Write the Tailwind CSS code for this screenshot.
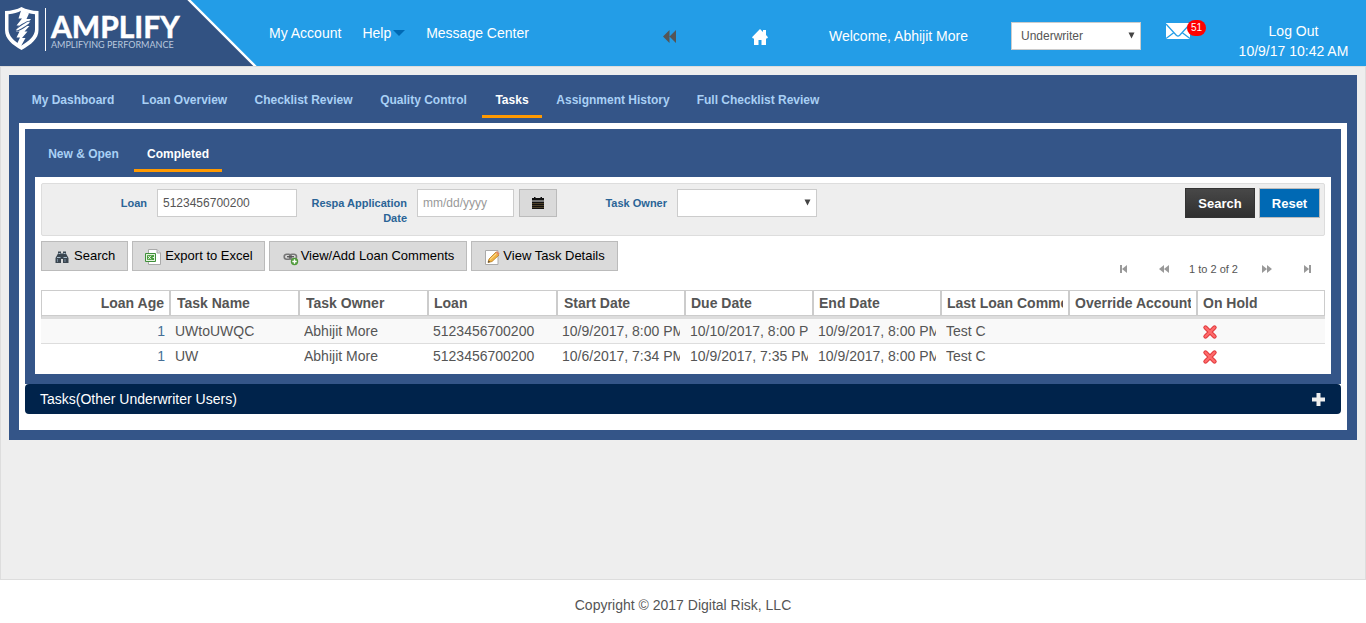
<!DOCTYPE html>
<html lang="en">
<head>
<meta charset="utf-8">
<title>Amplify - Tasks</title>
<script src="https://cdn.jsdelivr.net/npm/@tailwindcss/browser@4"></script>
</head>
<body class="flex min-h-screen flex-col bg-white font-['Liberation_Sans',Arial,sans-serif] text-sm text-[#555]">

<header class="flex h-[66px] items-start bg-[#239de7] text-white">
  <a href="#" aria-label="Amplify home" class="block w-[269px] shrink-0">
    <svg width="260" height="66" viewBox="0 0 260 66">
      <path d="M0 0H188L254 66H0Z" fill="#325282"/>
      <path d="M188 -1L256 67" stroke="#fff" stroke-width="2.4"/>
      <path d="M21.500 7C26 9.500 32 10.800 38.500 11V30C38.500 39 31 44.500 21.500 50C12 44.500 5 39 5 30V11C11.500 10.800 17 9.500 21.500 7Z" fill="#fff"/>
      <path d="M21.500 10.500C25.500 12.500 30 14 35 14.300V29.500C35 36 29 41 21.500 45.500C14 41 8.500 36 8.500 29.500V14.300C13.500 14 17.500 12.500 21.500 10.500Z" fill="#325282"/>
      <path d="M21.500 9L29 13.500L26.500 19H31L25.500 26H29.500L24.500 31.500H27.500L22 38H25.500L20.500 47L17 44L20 37.500H16.500L19.500 31.500H16L19 25.500H16.500L22 18.500H18.500Z" fill="#fff"/>
      <ellipse cx="23" cy="26" rx="8.500" ry="1.800" transform="rotate(-32 23 26)" fill="#fff" stroke="#325282" stroke-width="1"/>
      <path d="M45.500 8V51" stroke="#fff" stroke-width="1"/>
      <text x="51" y="38" font-family="Lato, sans-serif" font-weight="700" font-size="30" stroke="#fff" stroke-width=".5" fill="#fff">AMPLIFY</text>
      <text x="51" y="48" font-family="Lato, sans-serif" font-size="9" fill="#b9c8de">AMPLIFYING PERFORMANCE</text>
    </svg>
  </a>
  <nav class="flex items-center gap-[21px] pt-[23px] leading-5">
    <a href="#">My Account</a>
    <a href="#" class="flex items-center gap-0.5">Help
      <svg width="12" height="6" viewBox="0 0 12 6"><path d="M0 0H12L6 6Z" fill="#0069b4"/></svg>
    </a>
    <a href="#">Message Center</a>
  </nav>
  <div class="ml-auto flex items-start leading-5">
    <a href="#" aria-label="Back" class="mr-[76px] mt-[30px]">
      <svg width="13" height="13" viewBox="0 0 13 13"><path d="M0 6.500L6.500 0V13ZM6.500 6.500L13 0V13Z" fill="#555"/></svg>
    </a>
    <a href="#" aria-label="Home" class="mr-[61px] mt-[29px]">
      <svg width="16" height="16" viewBox="0 0 16 16"><path d="M8 0L11 3V1H14V6L16 8.300L15 9.500H14V16H9.500V11H6.500V16H2V9.500H1L0 8.300Z" fill="#fff"/></svg>
    </a>
    <span class="mr-[43px] mt-[26px]">Welcome, Abhijit More</span>
    <div class="relative mr-[25px] mt-[22px]">
      <select aria-label="Role" class="block h-7 w-[130px] appearance-none border border-[#ccc] bg-white px-[9px] text-xs text-[#555]"><option>Underwriter</option></select>
      <svg class="pointer-events-none absolute right-1.5 top-2.5" width="7" height="7" viewBox="0 0 7 7"><path d="M0.500 0.500H6.500L3.500 6.500Z" fill="#444"/></svg>
    </div>
    <a href="#" aria-label="Messages" class="relative mr-12 mt-[23px] block w-6">
      <svg width="24" height="16" viewBox="0 0 24 16"><path d="M0 0H24V16H0Z" fill="#fff"/><path d="M0 1L10.500 12.500Q12 13.500 13.500 12.500L24 1M0 15.500L8 9.500M24 15.500L16 9.500" fill="none" stroke="#239de7" stroke-width="1.300"/></svg>
      <span class="absolute -top-[3px] left-[21px] h-4 w-[19px] rounded-full bg-[#f00] text-center text-[10px] leading-4">51</span>
    </a>
    <div class="mr-[17px] mt-[21px] w-[111px] whitespace-nowrap text-center leading-5"><a href="#">Log Out</a><br>10/9/17 10:42 AM</div>
  </div>
</header>

<main class="flex-1 border border-[#ddd] bg-[#eee] p-2">
  <section class="bg-[#345588] px-2.5 pb-2.5">
    <nav class="flex h-12 gap-0.5 whitespace-nowrap text-center text-xs font-bold leading-[18px] text-[#a9d0f5]">
      <a href="#" class="h-[43px] w-[108px] pt-4">My Dashboard</a>
      <a href="#" class="h-[43px] w-[111px] pt-4">Loan Overview</a>
      <a href="#" class="h-[43px] w-[123px] pt-4">Checklist Review</a>
      <a href="#" class="h-[43px] w-[113px] pt-4">Quality Control</a>
      <a href="#" class="h-[43px] w-[60px] border-b-3 border-[#f90] pt-4 text-white">Tasks</a>
      <a href="#" class="h-[43px] w-[138px] pt-4">Assignment History</a>
      <a href="#" class="h-[43px] w-[148px] pt-4">Full Checklist Review</a>
    </nav>
    <div class="bg-white px-1.5 pb-4 pt-1.5">
      <div class="bg-[#345588] px-2.5 pb-2.5">
        <nav class="flex h-12 gap-0.5 whitespace-nowrap text-center text-xs font-bold leading-[18px] text-[#a9d0f5]">
          <a href="#" class="h-[43px] w-[97px] pt-4">New &amp; Open</a>
          <a href="#" class="h-[43px] w-[88px] border-b-3 border-[#f90] pt-4 text-white">Completed</a>
        </nav>
        <div class="bg-white px-1.5 pb-1.5 pt-1.5">
          <form class="flex h-[53px] items-start rounded-xs border border-[#ddd] bg-[#eee] pr-1 pt-1 text-[11px] font-bold leading-[15px] text-[#2a6496]">
            <label for="loan" class="mt-2 w-[105px] text-right">Loan</label>
            <input id="loan" type="text" value="5123456700200" class="ml-2.5 mt-px h-7 w-[140px] border border-[#ccc] bg-white px-[5px] text-xs font-normal text-[#555]">
            <label for="respa" class="mt-2 w-[110px] text-right">Respa Application Date</label>
            <input id="respa" type="text" placeholder="mm/dd/yyyy" class="ml-2.5 mt-px h-7 w-[97px] border border-[#ccc] bg-white px-[5px] text-xs font-normal placeholder:text-[#999]">
            <button type="button" aria-label="Pick a date" class="ml-[5px] mt-px flex h-7 w-[38px] items-center justify-center border border-[#bbb] bg-[#dadada]">
              <svg width="12" height="12" viewBox="0 0 12 12"><path d="M0 1H2V0H3.500V1H8.500V0H10V1H12V3.500H0ZM0 4.500H12V12H0Z" fill="#111"/><path d="M0 6.500H12M0 8.500H12M0 10.500H12" stroke="#8a7040" stroke-width=".5"/></svg>
            </button>
            <label for="owner" class="mt-2 w-[110px] text-right">Task Owner</label>
            <div class="relative ml-2.5 mt-px">
              <select id="owner" class="block h-7 w-[140px] appearance-none border border-[#ccc] bg-white px-[5px] text-xs font-normal"><option></option></select>
              <svg class="pointer-events-none absolute right-1.5 top-2.5" width="7" height="7" viewBox="0 0 7 7"><path d="M0.500 0.500H6.500L3.500 6.500Z" fill="#444"/></svg>
            </div>
            <button type="submit" class="ml-auto h-[30px] w-[70px] border border-[#333] bg-linear-to-b from-[#484848] to-[#303030] text-[13px] font-bold text-white">Search</button>
            <button type="reset" class="ml-1 h-[30px] w-[61px] border border-[#bbb] bg-[#0069b4] text-[13px] font-bold text-white">Reset</button>
          </form>

          <div class="mt-[5px] flex h-[49px] items-start gap-1 text-[13px] text-black">
            <button type="button" class="flex h-[30px] items-center gap-1 border border-[#bbb] bg-[#dadada] px-3">
              <svg class="mt-px" width="16" height="16" viewBox="0 0 16 16"><path d="M4 2.500h3v2h2v-2h3v2l2.500 4.500v5H9v-4H7v4H1.500V9L4 4.500Z" fill="#3b4650"/><path d="M3 8.500h3.500M9.500 8.500H13M4.500 4.500h2M9.500 4.500h2" stroke="#a9bccb" stroke-width="1"/><path d="M3.500 10v3M11 10v3" stroke="#76899a" stroke-width="1"/></svg>
              Search
            </button>
            <button type="button" class="flex h-[30px] items-center gap-1 border border-[#bbb] bg-[#dadada] pl-3 pr-[11px]">
              <svg class="mt-px" width="16" height="16" viewBox="0 0 16 16"><path d="M3.500.500h8.500l3.500 3.500v11.500h-12Z" fill="#fff" stroke="#aaa"/><path d="M12 .500V4h3.500" fill="#ddd" stroke="#aaa"/><path d="M.500 4.500h10v8H.500Z" fill="#e4f3df" stroke="#3f8f3a"/><path d="M2 6h7v5H2Z" fill="#4c9f3f"/><path d="M3 6.700L6 10.300M6 6.700L3 10.300M7.700 8.500H9" stroke="#fff" stroke-width=".9"/></svg>
              Export to Excel
            </button>
            <button type="button" class="flex h-[30px] items-center gap-0.5 border border-[#bbb] bg-[#dadada] px-3">
              <svg class="mt-1" width="17" height="16" viewBox="0 0 17 16"><rect x="2.200" y="4.200" width="7" height="5" rx="2.500" fill="none" stroke="#777" stroke-width="1.600"/><rect x="7.500" y="4.200" width="7" height="5" rx="2.500" fill="none" stroke="#777" stroke-width="1.600"/><path d="M5 6.700h7" stroke="#555" stroke-width="1.300"/><circle cx="12.500" cy="11.500" r="3.700" fill="#4f9a3a"/><path d="M12.500 9.300v4.400M10.300 11.500h4.400" stroke="#fff" stroke-width="1.400"/></svg>
              View/Add Loan Comments
            </button>
            <button type="button" class="flex h-[30px] items-center gap-0.5 border border-[#bbb] bg-[#dadada] px-3">
              <svg class="mt-px" width="17" height="16" viewBox="0 0 17 16"><path d="M1.500 1.500h12.500v14H1.500Z" fill="#fff" stroke="#aaa"/><path d="M4 13.500l1-3.500L12 3l3 3L8 12.500Z" fill="#f2b544" stroke="#b87a1e" stroke-width=".8"/><path d="M6 10.500L13 4" stroke="#ffe09a"/><path d="M11.500 3.500L13 2l2.500 2.500L14.500 6.500Z" fill="#e08a62"/><path d="M4 13.500l.6-2 1.500 1.500Z" fill="#444"/></svg>
              View Task Details
            </button>
            <div class="ml-auto mr-3.5 mt-5 flex h-4 items-center text-[11px] leading-4 text-[#555]">
              <button type="button" aria-label="First page" class="mr-[31px]"><svg width="8" height="8" viewBox="0 0 8 8"><path d="M0 0H2V8H0ZM2 4L7 0V8Z" fill="#999"/></svg></button>
              <button type="button" aria-label="Previous page" class="mr-5"><svg width="10" height="8" viewBox="0 0 10 8"><path d="M0 4L5 0V8ZM5 4L10 0V8Z" fill="#999"/></svg></button>
              <span class="mr-6">1 to 2 of 2</span>
              <button type="button" aria-label="Next page" class="mr-[31px]"><svg width="10" height="8" viewBox="0 0 10 8"><path d="M0 0L5 4L0 8ZM5 0L10 4L5 8Z" fill="#999"/></svg></button>
              <button type="button" aria-label="Last page"><svg width="8" height="8" viewBox="0 0 8 8"><path d="M1 0L6 4L1 8ZM6 0H8V8H6Z" fill="#999"/></svg></button>
            </div>
          </div>

          <table class="w-full table-fixed border-separate border-spacing-0 whitespace-nowrap text-left leading-6">
            <colgroup>
              <col class="w-[129px]"><col class="w-[129px]"><col class="w-[129px]"><col class="w-[129px]">
              <col><col><col><col><col><col>
            </colgroup>
            <thead>
              <tr class="[&>th]:h-[29px] [&>th]:border-b-3 [&>th]:border-t [&>th]:border-b-[#ddd] [&>th]:border-t-[#ccc] [&>th]:p-0">
                <th class="border-l border-l-[#ccc]"><div class="overflow-hidden border-b border-r border-[#ccc] pr-[5px] text-right">Loan Age</div></th>
                <th><div class="border-b border-l border-r border-[#ccc] px-1.5"><div class="overflow-hidden">Task Name</div></div></th>
                <th><div class="border-b border-l border-r border-[#ccc] px-1.5"><div class="overflow-hidden">Task Owner</div></div></th>
                <th><div class="border-b border-l border-r border-[#ccc] px-[5px]"><div class="overflow-hidden">Loan</div></div></th>
                <th><div class="border-b border-l border-r border-[#ccc] px-1.5"><div class="overflow-hidden">Start Date</div></div></th>
                <th><div class="border-b border-l border-r border-[#ccc] px-[5px]"><div class="overflow-hidden">Due Date</div></div></th>
                <th><div class="border-b border-l border-r border-[#ccc] px-[5px]"><div class="overflow-hidden">End Date</div></div></th>
                <th><div class="border-b border-l border-r border-[#ccc] px-[5px]"><div class="overflow-hidden">Last Loan Comments</div></div></th>
                <th><div class="border-b border-l border-r border-[#ccc] px-[5px]"><div class="overflow-hidden">Override Account</div></div></th>
                <th><div class="border-b border-l border-r border-[#ccc] px-[5px]"><div class="overflow-hidden">On Hold</div></div></th>
              </tr>
            </thead>
            <tbody>
              <tr class="bg-[#f9f9f9] [&>td]:border-b [&>td]:border-[#ddd] [&>td]:px-[5px] [&>td]:py-0">
                <td class="text-right text-[#456f96]">1</td>
                <td><div class="overflow-hidden">UWtoUWQC</div></td>
                <td><div class="overflow-hidden">Abhijit More</div></td>
                <td><div class="overflow-hidden">5123456700200</div></td>
                <td><div class="overflow-hidden">10/9/2017, 8:00 PM</div></td>
                <td><div class="overflow-hidden">10/10/2017, 8:00 PM</div></td>
                <td><div class="overflow-hidden">10/9/2017, 8:00 PM</div></td>
                <td><div class="overflow-hidden">Test C</div></td>
                <td></td>
                <td><svg class="mt-px block" role="img" aria-label="No" width="16" height="16" viewBox="0 0 16 16"><path d="M3.500 3.500L12.500 12.500M12.500 3.500L3.500 12.500" stroke="#e03a3e" stroke-width="4.400" stroke-linecap="round"/><path d="M3.500 3.500L12.500 12.500M12.500 3.500L3.500 12.500" stroke="#ff6b6b" stroke-width="2.400" stroke-linecap="round"/></svg></td>
              </tr>
              <tr class="[&>td]:h-6 [&>td]:px-[5px] [&>td]:py-0">
                <td class="text-right text-[#456f96]">1</td>
                <td><div class="overflow-hidden">UW</div></td>
                <td><div class="overflow-hidden">Abhijit More</div></td>
                <td><div class="overflow-hidden">5123456700200</div></td>
                <td><div class="overflow-hidden">10/6/2017, 7:34 PM</div></td>
                <td><div class="overflow-hidden">10/9/2017, 7:35 PM</div></td>
                <td><div class="overflow-hidden">10/9/2017, 8:00 PM</div></td>
                <td><div class="overflow-hidden">Test C</div></td>
                <td></td>
                <td><svg class="mt-px block" role="img" aria-label="No" width="16" height="16" viewBox="0 0 16 16"><path d="M3.500 3.500L12.500 12.500M12.500 3.500L3.500 12.500" stroke="#e03a3e" stroke-width="4.400" stroke-linecap="round"/><path d="M3.500 3.500L12.500 12.500M12.500 3.500L3.500 12.500" stroke="#ff6b6b" stroke-width="2.400" stroke-linecap="round"/></svg></td>
              </tr>
            </tbody>
          </table>
        </div>
      </div>
      <button type="button" class="flex h-[30px] w-full items-center justify-between rounded bg-[#00234b] pl-[15px] pr-4 text-white">
        Tasks(Other Underwriter Users)
        <svg width="13" height="13" viewBox="0 0 13 13"><path d="M4.500 0H8.500V4.500H13V8.500H8.500V13H4.500V8.500H0V4.500H4.500Z" fill="#eee"/></svg>
      </button>
    </div>
  </section>
</main>

<footer class="flex h-[43px] items-center justify-center pt-1.5">Copyright © 2017 Digital Risk, LLC</footer>
</body>
</html>
